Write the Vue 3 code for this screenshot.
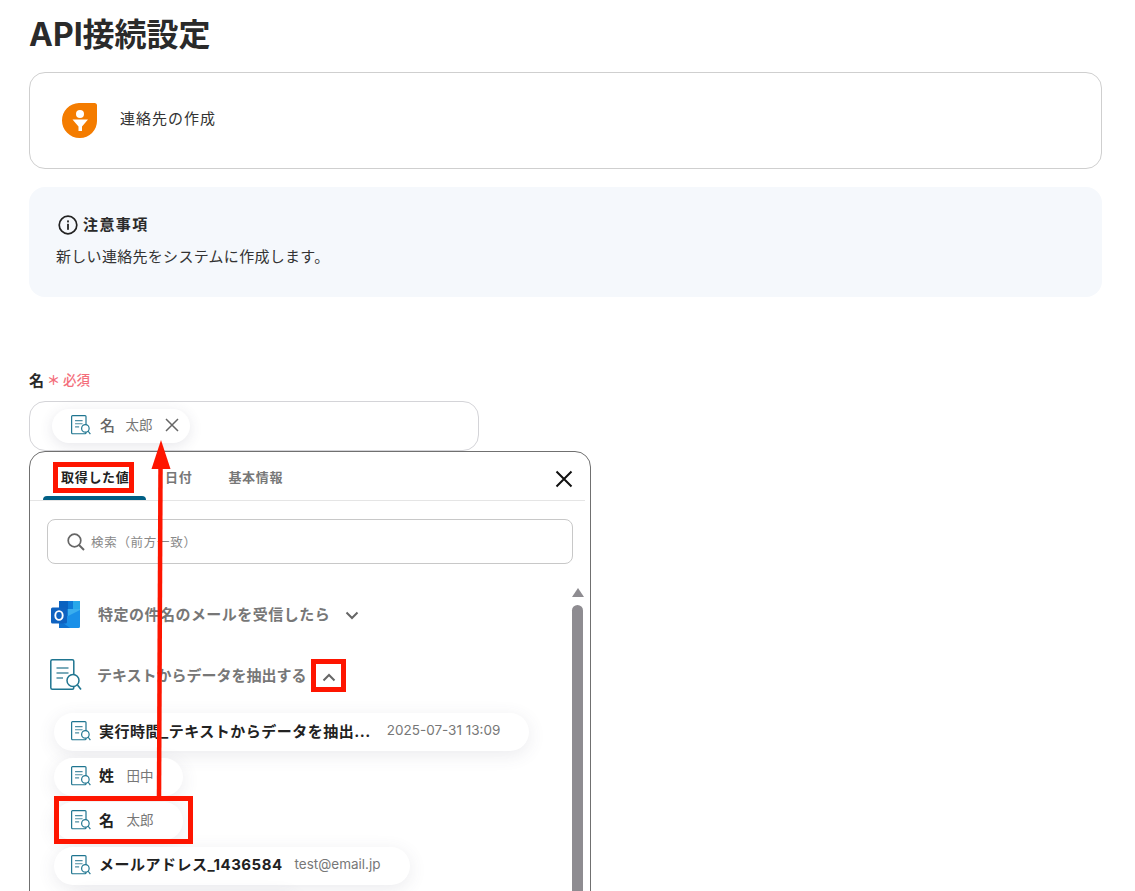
<script setup>
const rows = [
  { id: 1, name: '実行時間_テキストからデータを抽出...', value: '2025-07-31 13:09', cls: 'wide' },
  { id: 2, name: '姓', value: '田中', cls: 'short' },
  { id: 3, name: '名', value: '太郎', cls: 'short' },
  { id: 4, name: 'メールアドレス_1436584', value: 'test@email.jp', cls: 'mail' },
  { id: 5, name: '', value: '', cls: 'last' },
]
</script>

<template>
  <div class="page">
    <h1 class="title">API接続設定</h1>

    <section class="card">
      <svg class="brand" viewBox="0 0 35 35" aria-hidden="true">
        <path d="M17 0H32.500A2.500 2.500 0 0 1 35 2.500V18A17 17 0 0 1 18 35H17.500A17.500 17.500 0 0 1 0 17.500A17.500 17.500 0 0 1 17 0Z" fill="#f47c00" />
        <circle cx="18" cy="11" r="4" fill="#fff" />
        <path d="M10.500 16.500H26L20 23.500V28H16.500V23.500Z" fill="#fff" />
      </svg>
      <span class="card-text">連絡先の作成</span>
    </section>

    <section class="notice">
      <div class="notice-head">
        <svg class="info" viewBox="0 0 20 20" aria-hidden="true">
          <circle cx="10" cy="10" r="8.800" fill="none" stroke="#222" stroke-width="1.700" />
          <rect x="9.100" y="8.800" width="1.800" height="6" fill="#222" />
          <rect x="9.100" y="5.400" width="1.800" height="2" fill="#222" />
        </svg>
        <span>注意事項</span>
      </div>
      <p class="notice-body">新しい連絡先をシステムに作成します。</p>
    </section>

    <div class="label">
      <span class="label-name">名</span>
      <span class="req-mark">＊</span>
      <span class="req">必須</span>
    </div>

    <div class="field">
      <div class="chip field-chip">
        <svg class="doc" viewBox="0 0 32 32" aria-hidden="true">
          <rect x="1" y="1" width="23" height="29" rx="1.500" fill="none" stroke="#1f7590" stroke-width="1.900" />
          <path d="M6.500 9H18.500M6.500 14H18.500M6.500 19H13" fill="none" stroke="#4d8ea3" stroke-width="1.800" />
          <circle cx="23" cy="21.500" r="6" fill="#fff" stroke="#1f7590" stroke-width="1.900" />
          <path d="M27.500 26L31 30.500" stroke="#1f7590" stroke-width="1.900" />
        </svg>
        <span class="chip-name light">名</span>
        <span class="chip-value">太郎</span>
        <svg class="chip-x" viewBox="0 0 14 14" aria-hidden="true">
          <path d="M1 1L13 13M13 1L1 13" stroke="#666" stroke-width="1.500" fill="none" />
        </svg>
      </div>
    </div>

    <div class="panel">
      <div class="tabs">
        <div class="tab active">取得した値</div>
        <div class="tab date">日付</div>
        <div class="tab">基本情報</div>
        <svg class="close" viewBox="0 0 18 18" aria-hidden="true">
          <path d="M1.500 1.500L16.500 16.500M16.500 1.500L1.500 16.500" stroke="#111" stroke-width="2" fill="none" />
        </svg>
      </div>

      <div class="search">
        <svg class="search-icon" viewBox="0 0 18 18" aria-hidden="true">
          <circle cx="7.500" cy="7.500" r="6.300" fill="none" stroke="#666" stroke-width="1.700" />
          <path d="M12 12L17 17" stroke="#666" stroke-width="1.900" />
        </svg>
        <span>検索（前方一致）</span>
      </div>

      <div class="list-wrap">
        <div class="list">
          <div class="group first">
            <svg class="outlook" viewBox="0 0 32 30" aria-hidden="true">
              <rect x="9" y="1" width="21" height="16" rx="1.500" fill="#0f7ad8" />
              <rect x="9" y="1" width="9" height="8" fill="#0a62c0" />
              <rect x="23" y="1" width="7" height="8" fill="#28a8ea" />
              <rect x="18" y="9" width="12" height="9" fill="#3aaeee" />
              <rect x="9" y="9" width="9" height="9" fill="#0f7ad8" />
              <path d="M9 17L18 16L30 10V26.500A1.500 1.500 0 0 1 28.500 28H11A2 2 0 0 1 9 26Z" fill="#1a90e8" />
              <path d="M9 28V20L20 28Z" fill="#0f72d0" />
              <rect x="1" y="7.500" width="16" height="16" rx="1.500" fill="#0f62c0" />
              <ellipse cx="9" cy="15.500" rx="3.700" ry="4.400" fill="none" stroke="#fff" stroke-width="1.900" />
            </svg>
            <span class="group-name wider">特定の件名のメールを受信したら</span>
            <svg class="chev down" viewBox="0 0 14 9" aria-hidden="true">
              <path d="M1.500 1.500L7 7L12.500 1.500" fill="none" stroke="#666" stroke-width="2" />
            </svg>
          </div>

          <div class="group second">
            <svg class="doc large" viewBox="0 0 32 32" aria-hidden="true">
              <rect x="0.800" y="0.800" width="23" height="29.500" rx="1.500" fill="none" stroke="#1f7590" stroke-width="1.500" />
              <path d="M6.500 9H18.500M6.500 14H18.500M6.500 19H13" fill="none" stroke="#4d8ea3" stroke-width="1.400" />
              <circle cx="23" cy="21.500" r="6" fill="#fff" stroke="#1f7590" stroke-width="1.500" />
              <path d="M27.500 26L31 30.500" stroke="#1f7590" stroke-width="1.600" />
            </svg>
            <span class="group-name">テキストからデータを抽出する</span>
            <svg class="chev up" viewBox="0 0 14 9" aria-hidden="true">
              <path d="M1.500 7.500L7 2L12.500 7.500" fill="none" stroke="#666" stroke-width="2" />
            </svg>
          </div>

          <div class="rows">
            <div v-for="row in rows" :key="row.id" class="chip list-chip" :class="row.cls">
              <template v-if="row.name">
                <svg class="doc" viewBox="0 0 32 32" aria-hidden="true">
                  <rect x="1" y="1" width="23" height="29" rx="1.500" fill="none" stroke="#1f7590" stroke-width="1.900" />
                  <path d="M6.500 9H18.500M6.500 14H18.500M6.500 19H13" fill="none" stroke="#4d8ea3" stroke-width="1.800" />
                  <circle cx="23" cy="21.500" r="6" fill="#fff" stroke="#1f7590" stroke-width="1.900" />
                  <path d="M27.500 26L31 30.500" stroke="#1f7590" stroke-width="1.900" />
                </svg>
                <span class="chip-name">{{ row.name }}</span>
                <span class="chip-value">{{ row.value }}</span>
              </template>
            </div>
          </div>
        </div>

        <div class="scrollbar">
          <div class="scroll-arrow"></div>
          <div class="scroll-thumb"></div>
        </div>
      </div>
    </div>

    <div class="mark mark-tab"></div>
    <div class="mark mark-chev"></div>
    <div class="mark mark-row"></div>
    <svg class="arrow" viewBox="0 0 40 370" aria-hidden="true">
      <path d="M20.500 28L19 358" stroke="#fe1500" stroke-width="4.500" fill="none" />
      <path d="M21 0L11.500 29H30.500Z" fill="#fe1500" />
    </svg>
  </div>
</template>

<style>
html, body { margin: 0; background: #fff; }
</style>

<style scoped>
.page {
  position: relative;
  box-sizing: border-box;
  height: 891px;
  overflow: hidden;
  padding: 0 33px 0 29px;
  font-family: Inter, "Noto Sans CJK JP", sans-serif;
  color: #222;
  background: #fff;
}
.title {
  margin: 0;
  height: 72px;
  box-sizing: border-box;
  padding-top: 11px;
  font-size: 32px;
  line-height: 48px;
  font-weight: 700;
  color: #2a2a2a;
}
.card {
  box-sizing: border-box;
  height: 97px;
  border: 1px solid #cfcfcf;
  border-radius: 16px;
  display: flex;
  align-items: center;
  padding-left: 32px;
  gap: 23px;
}
.brand { width: 35px; height: 35px; flex: none; }
.card-text { margin-bottom: 6px; font-size: 15px; letter-spacing: 1px; color: #333; }
.notice {
  box-sizing: border-box;
  margin-top: 18px;
  height: 110px;
  background: #f5f8fc;
  border-radius: 16px;
  padding: 27px 27px 0;
}
.notice-head {
  display: flex;
  align-items: center;
  gap: 5px;
  padding-left: 2px;
  font-size: 15px;
  line-height: 22px;
  font-weight: 700;
  letter-spacing: 1.400px;
  color: #2a2a2a;
}
.info { width: 20px; height: 20px; flex: none; }
.notice-body {
  margin: 9px 0 0;
  font-size: 15px;
  line-height: 24px;
  letter-spacing: 0.300px;
  color: #333;
}
.label {
  box-sizing: border-box;
  margin-top: 72px;
  height: 24px;
  padding-bottom: 4px;
  display: flex;
  align-items: center;
  font-weight: 700;
}
.label-name { font-size: 15px; color: #2a2a2a; }
.req-mark { margin-left: 3px; font-size: 13px; color: #f46e7b; font-weight: 700; }
.req { margin-left: 3px; font-size: 13.500px; color: #f46e7b; font-weight: 500; }
.field {
  box-sizing: border-box;
  margin-top: 8px;
  width: 450px;
  height: 50px;
  border: 1px solid #d4d4d8;
  border-radius: 16px;
  padding: 7px 0 0 22px;
}
.chip {
  box-sizing: border-box;
  display: flex;
  align-items: center;
  background: #fff;
  padding-bottom: 2px;
  box-shadow: 0 3px 14px rgba(60, 60, 90, 0.12);
}
.field-chip {
  width: 138px;
  height: 34px;
  border-radius: 17px;
  padding-left: 19px;
}
.doc { width: 20px; height: 20px; flex: none; }
.chip-name {
  margin-left: 8px;
  margin-bottom: 2px;
  font-size: 15px;
  font-weight: 700;
  letter-spacing: 0.500px;
  color: #222;
  white-space: nowrap;
}
.chip-name.light { margin-left: 9px; font-weight: 500; color: #666; }
.chip-value {
  margin-left: 12px;
  margin-bottom: 2px;
  font-size: 13.500px;
  color: #777;
  white-space: nowrap;
}
.field-chip .chip-value { margin-left: 10px; }
.wide .chip-value { margin-left: 16px; }
.chip-x { width: 14px; height: 14px; margin-left: 12px; flex: none; }
.panel {
  box-sizing: border-box;
  width: 562px;
  height: 520px;
  border: 1px solid #707070;
  border-radius: 16px;
  background: #fff;
}
.tabs {
  position: relative;
  display: flex;
  height: 48px;
  border-bottom: 1px solid #e5e5e5;
  margin-right: 5px;
  padding-left: 13px;
}
.tab {
  position: relative;
  box-sizing: border-box;
  height: 48px;
  line-height: 50px;
  font-size: 13px;
  font-weight: 700;
  letter-spacing: 0.700px;
  color: #777;
  white-space: nowrap;
  padding: 0 18px;
}
.tab.active { width: 103px; color: #222; }
.tab.active::after {
  content: "";
  position: absolute;
  left: 0;
  right: 0;
  bottom: 0;
  height: 4px;
  background: #005f85;
  border-radius: 4px 4px 0 0;
}
.tab.date { padding: 0 18px 0 19px; }
.close {
  position: absolute;
  right: 12px;
  top: 18px;
  width: 18px;
  height: 18px;
}
.search {
  box-sizing: border-box;
  display: flex;
  align-items: center;
  margin: 18px 17px 0 17px;
  height: 45px;
  border: 1px solid #c8c8c8;
  border-radius: 8px;
  padding-left: 19px;
  font-size: 12.500px;
  letter-spacing: 0.700px;
  color: #888;
}
.search-icon { width: 18px; height: 18px; margin-right: 6px; flex: none; }
.list-wrap { display: flex; }
.list { flex: 1; min-width: 0; }
.group { display: flex; align-items: center; }
.group-name {
  margin-bottom: 2px;
  font-size: 15px;
  font-weight: 700;
  color: #777;
  white-space: nowrap;
}
.group-name.wider { margin-bottom: 4px; letter-spacing: 0.480px; }
.group.first { margin: 35px 0 0 20px; height: 32px; }
.group.second { margin: 28px 0 0 20px; height: 32px; }
.outlook { width: 32px; height: 30px; margin-right: 16px; flex: none; }
.doc.large { width: 32px; height: 32px; margin-right: 15px; }
.chev.down { width: 14px; height: 9px; margin-left: 15px; }
.chev.up { width: 14px; height: 9px; margin-left: 15px; margin-top: 4px; }
.rows {
  margin: 22px 0 0 24px;
  display: flex;
  flex-direction: column;
  gap: 6.670px;
}
.list-chip {
  height: 38px;
  flex: none;
  border-radius: 19px;
  padding-left: 17px;
  box-shadow: 0 4px 18px rgba(70, 70, 100, 0.11);
}
.wide { width: 475px; }
.short { width: 129px; }
.mail { width: 356px; }
.last { width: 230px; margin-left: 16px; }
.scrollbar {
  width: 13px;
  margin: 24px 6px 0 0;
  display: flex;
  flex-direction: column;
  align-items: center;
  flex: none;
}
.scroll-arrow {
  width: 0;
  height: 0;
  border-left: 6.500px solid transparent;
  border-right: 6.500px solid transparent;
  border-bottom: 9px solid #8e8c91;
}
.scroll-thumb {
  margin-top: 8px;
  width: 11px;
  height: 320px;
  background: #8e8c91;
  border-radius: 6px 6px 0 0;
}
.mark {
  position: absolute;
  box-sizing: border-box;
  border: 5px solid #fe1500;
  pointer-events: none;
}
.mark-tab { left: 53px; top: 462px; width: 81px; height: 31px; }
.mark-chev { left: 311px; top: 659px; width: 35px; height: 33px; }
.mark-row { left: 54px; top: 796px; width: 139px; height: 48px; }
.arrow {
  position: absolute;
  left: 140px;
  top: 440px;
  width: 40px;
  height: 370px;
  pointer-events: none;
}
</style>
